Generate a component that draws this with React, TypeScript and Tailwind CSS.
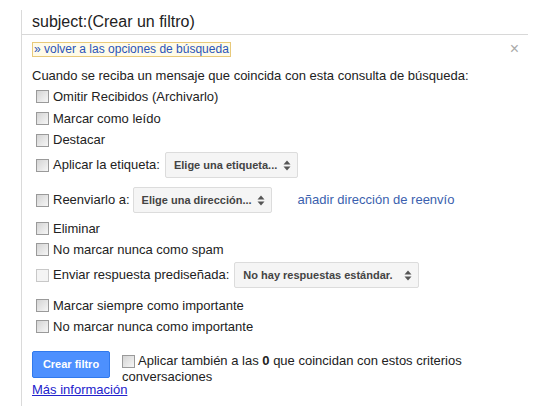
const Box = ({ light }: { light?: boolean }) => (
  <span
    className={`inline-block h-[13px] w-[13px] shrink-0 border ${
      light
        ? 'border-[#c8c8c8] bg-[#f4f4f4]'
        : 'border-[#9a9a9a] bg-gradient-to-br from-[#d4d4d4] to-[#f6f6f6]'
    }`}
  />
)

const Select = ({ text, w }: { text: string; w: string }) => (
  <span
    className={`flex h-[26px] ${w} items-center justify-between rounded-[2px] border border-[#dcdcdc] bg-[#f5f5f5] pl-[8px] pr-[6px] text-[11px] font-bold text-[#444]`}
  >
    <span>{text}</span>
    <svg width="8" height="11" viewBox="0 0 8 11" className="ml-1">
      <path d="M4 0.5 L7.5 4.5 H0.5 Z" fill="#555" />
      <path d="M4 10.5 L7.5 6.5 H0.5 Z" fill="#555" />
    </svg>
  </span>
)

const Row = ({
  label,
  className = '',
  light,
  children,
}: {
  label: string
  className?: string
  light?: boolean
  children?: React.ReactNode
}) => (
  <div className={`flex items-center pl-[4px] ${className}`}>
    <Box light={light} />
    <span className="ml-[4px]">{label}</span>
    {children}
  </div>
)

export default function App() {
  return (
    <div
      className="h-[413px] w-[539px] bg-white pt-[10px] text-[13px] text-[#222]"
      style={{ fontFamily: '"Liberation Sans", Arial, sans-serif' }}
    >
      <div className="ml-[21px] mr-[11px] h-[396px] border-l border-[#dadada]">
        <div className="flex h-[25px] items-center border-b border-[#d8d8d8] pl-[10px] pb-[1px] text-[16px] text-[#222]">
          subject:(Crear un filtro)
        </div>
        <div className="flex items-start justify-between pl-[10px] pt-[7px]">
          <span className="border border-[#e8c97a] bg-[#fffbe8] px-[1px] leading-[13px] text-[12px] text-[#2a54b8]">
            » volver a las opciones de búsqueda
          </span>
          <span className="mr-[9px] mt-[-1px] text-[16px] leading-none text-[#aaa]">
            ×
          </span>
        </div>
        <div className="pl-[10px]">
          <div className="mt-[8px] flex h-[21px] items-center">
            Cuando se reciba un mensaje que coincida con esta consulta de búsqueda:
          </div>
          <Row label="Omitir Recibidos (Archivarlo)" className="h-[21px]" />
          <Row label="Marcar como leído" className="mt-[1px] h-[21px]" />
          <Row label="Destacar" className="h-[22px]" />
          <Row label="Aplicar la etiqueta:" className="mt-[1px] h-[26px]">
            <span className="ml-[5px]">
              <Select text="Elige una etiqueta..." w="w-[133px]" />
            </span>
          </Row>
          <Row label="Reenviarlo a:" className="mt-[9px] h-[26px]">
            <span className="ml-[3px]">
              <Select text="Elige una dirección..." w="w-[139px]" />
            </span>
            <span className="ml-[26px] text-[#3b5fae]">añadir dirección de reenvío</span>
          </Row>
          <Row label="Eliminar" className="mt-[5px] h-[21px]" />
          <Row label="No marcar nunca como spam" className="h-[21px]" />
          <Row label="Enviar respuesta prediseñada:" light className="mt-[2px] h-[26px]">
            <span className="ml-[5px]">
              <Select text="No hay respuestas estándar." w="w-[185px]" />
            </span>
          </Row>
          <Row label="Marcar siempre como importante" className="mt-[7px] h-[21px]" />
          <Row label="No marcar nunca como importante" className="h-[21px]" />
          <div className="mt-[14px] flex items-start">
            <button className="h-[27px] w-[78px] rounded-[2px] border border-[#3079ed] bg-[#4d90fe] text-[11px] font-bold text-white">
              Crear filtro
            </button>
            <div className="ml-[12px] mt-[2px] leading-[16px]">
              <div className="flex items-center">
                <Box />
                <span className="ml-[3px]">
                  Aplicar también a las <b>0</b> que coincidan con estos criterios
                </span>
              </div>
              <div className="leading-[15px]">conversaciones</div>
            </div>
          </div>
          <a className="mt-[-4px] block w-fit text-[#2222cc] underline" href="#">
            Más información
          </a>
        </div>
      </div>
    </div>
  )
}
